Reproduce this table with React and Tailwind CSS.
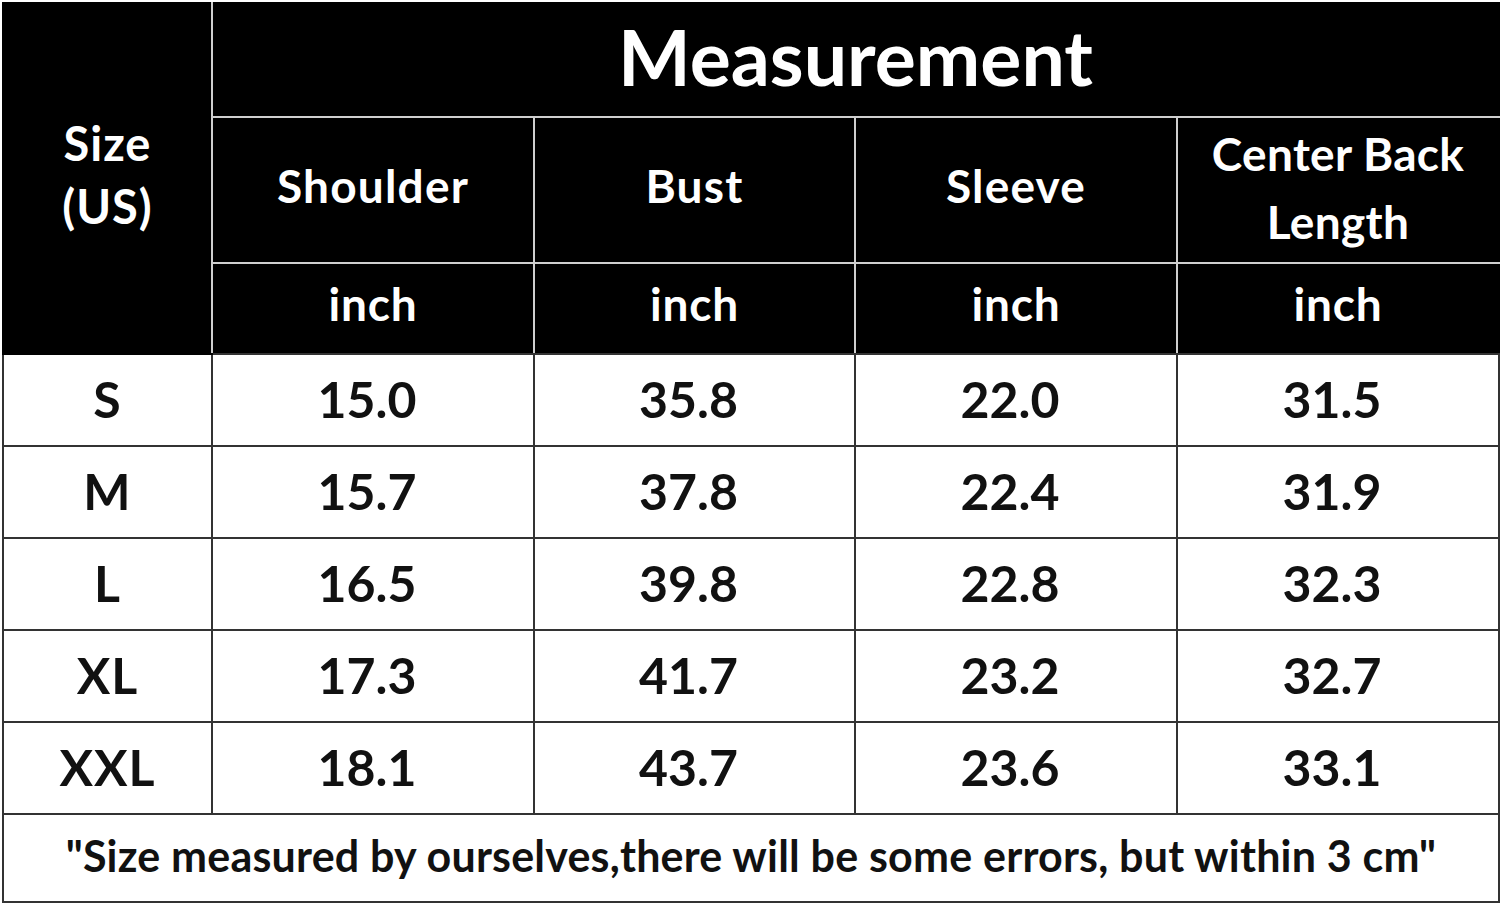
const HEAD = ['Shoulder', 'Bust', 'Sleeve'];

const ROWS = [
	['S', '15.0', '35.8', '22.0', '31.5'],
	['M', '15.7', '37.8', '22.4', '31.9'],
	['L', '16.5', '39.8', '22.8', '32.3'],
	['XL', '17.3', '41.7', '23.2', '32.7'],
	['XXL', '18.1', '43.7', '23.6', '33.1'],
];

const font = { fontFamily: 'Lato, "Open Sans", sans-serif' };

export default function App() {
	return (
		<div className="min-h-screen bg-white pl-[2px] pt-[2px]" style={font}>
			<table className="w-[1496px] table-fixed border-collapse font-bold">
				<colgroup>
					<col className="w-[209px]" />
					<col className="w-[322px]" />
					<col className="w-[321px]" />
					<col className="w-[322px]" />
					<col className="w-[322px]" />
				</colgroup>
				<thead className="bg-black text-white">
					<tr className="h-[114px]">
						<td rowSpan={3} className="border-2 border-black border-r-[#cfcfcf] pb-[8px] text-center align-middle text-[47px] leading-[63px] tracking-[1px]">
							Size<br />(US)
						</td>
						<td colSpan={4} className="border-2 border-black border-b-[#cfcfcf] pb-[8px] text-center text-[77px] leading-none">
							Measurement
						</td>
					</tr>
					<tr className="h-[146px]">
						{HEAD.map((h) => (
							<td key={h} className="border-2 border-[#cfcfcf] pb-[8px] text-center text-[46px] leading-[56px] tracking-[1.2px]">{h}</td>
						))}
						<td className="border-2 border-[#cfcfcf] border-r-black pb-[4px] text-center text-[46px] leading-[68px] tracking-[0.3px]">
							Center Back<br />Length
						</td>
					</tr>
					<tr className="h-[91px]">
						{[0, 1, 2, 3].map((i) => (
							<td key={i} className={`border-2 border-[#cfcfcf] border-b-[#333] pb-[10px] text-center text-[46px] leading-[56px] tracking-[0.8px] ${i === 3 ? 'border-r-black' : ''}`}>inch</td>
						))}
					</tr>
				</thead>
				<tbody className="text-[#111]">
					{ROWS.map((r) => (
						<tr key={r[0]} className="h-[92px]">
							{r.map((c, i) => (
								<td key={i} className={`border-2 border-[#333] pb-[2px] text-center text-[50px] leading-[60px] ${i === 0 ? 'tracking-[1px]' : 'pr-[12px]'}`}>{c}</td>
							))}
						</tr>
					))}
					<tr className="h-[88px]">
						<td colSpan={5} className="border-2 border-[#333] pb-[4px] text-center text-[43px] leading-[52px] tracking-[0.2px]">
							"Size measured by ourselves,there will be some errors, but within 3 cm"
						</td>
					</tr>
				</tbody>
			</table>
		</div>
	);
}
